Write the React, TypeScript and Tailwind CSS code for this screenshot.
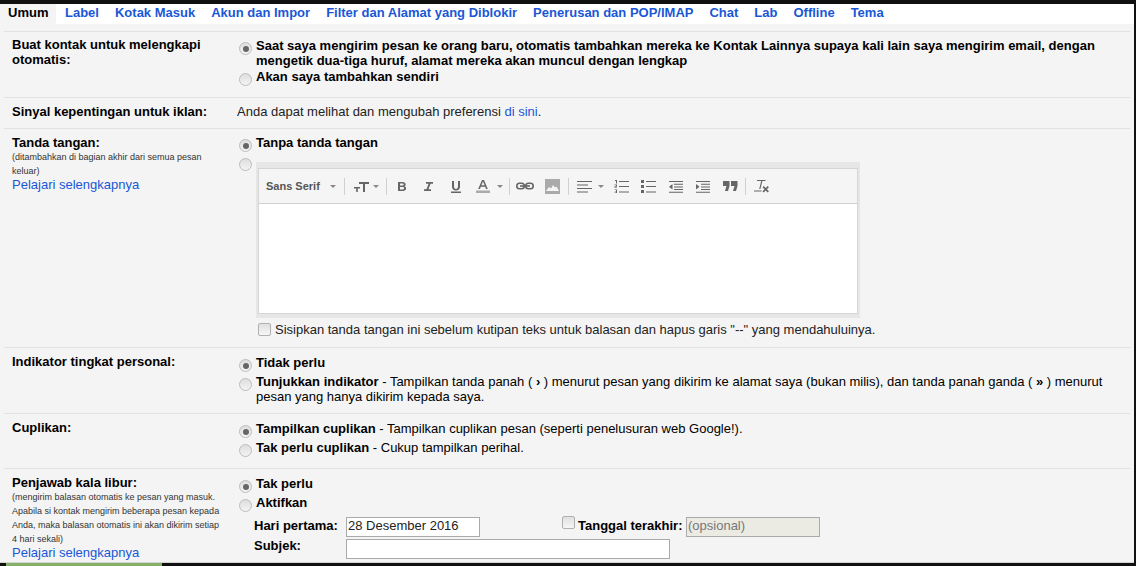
import React from "react";

const font = "font-['Liberation_Sans',Arial,sans-serif]";

const tabs = [
  "Label",
  "Kotak Masuk",
  "Akun dan Impor",
  "Filter dan Alamat yang Diblokir",
  "Penerusan dan POP/IMAP",
  "Chat",
  "Lab",
  "Offline",
  "Tema",
];

function Radio({ on }: { on?: boolean }) {
  return (
    <span className="mt-[4px] -mb-[2px] mr-[4px] flex h-[13px] w-[13px] shrink-0 items-center justify-center rounded-full border border-[#bcbcbc] bg-gradient-to-b from-[#dedede] to-[#f4f4f4]">
      {on && <span className="h-[6px] w-[6px] rounded-full bg-[#666]" />}
    </span>
  );
}

function Check({ className = "" }: { className?: string }) {
  return <span className={"block h-[13px] w-[13px] shrink-0 rounded-[2px] border border-[#b0b0b0] bg-gradient-to-b from-[#e0e0e0] to-[#f6f6f6] " + className} />;
}

function Sep({ className = "" }: { className?: string }) {
  return <span className={"h-[17px] w-px shrink-0 bg-[#d0d0d0] " + className} />;
}

function Caret({ className = "" }: { className?: string }) {
  return <span className={"h-0 w-0 shrink-0 border-x-[3px] border-t-[3px] border-x-transparent border-t-[#888] " + className} />;
}

function Tool({ children, w = 18, className = "" }: { children: React.ReactNode; w?: number; className?: string }) {
  return (
    <svg width={w} height="18" viewBox={`0 0 ${w} 18`} className={"shrink-0 " + className} fill="#666">
      {children}
    </svg>
  );
}

function Toolbar() {
  return (
    <div className="flex h-[35px] items-center border-b border-[#d0d0d0] bg-[#f5f5f5] pl-[7px]">
      <span className="w-[54px] shrink-0 text-[11px] font-bold leading-none text-[#555]">Sans Serif</span>
      <Caret className="ml-[10px]" />
      <Sep className="ml-[8px]" />
      <Tool w={16} className="ml-[8px]">
        <path d="M1 10h6v1.400H4.800V15H3.200v-3.600H1zM6 5h10v2h-4v8h-2V7H6z" />
      </Tool>
      <Caret className="ml-[4px]" />
      <Sep className="ml-[7px]" />
      <Tool w={18} className="ml-[6px]">
        <path fillRule="evenodd" d="M5 5h4.500c2 0 3.200.9 3.200 2.400 0 .9-.5 1.500-1.200 1.800 1 .3 1.600 1.100 1.600 2.100 0 1.700-1.300 2.700-3.300 2.700H5zm2 1.600v2h2.300c.9 0 1.400-.4 1.400-1s-.5-1-1.400-1zm0 3.500v2.300h2.600c.9 0 1.500-.4 1.500-1.100s-.6-1.200-1.500-1.200z" />
      </Tool>
      <Tool w={18} className="ml-[8px]">
        <path d="M7 5h7v1.800h-2.400L9.400 12.200H12V14H5v-1.800h2.400l2.200-5.400H7z" />
      </Tool>
      <Tool w={18} className="ml-[10px]">
        <path d="M5 4h2v5.500c0 1.500.8 2.400 2 2.400s2-.9 2-2.400V4h2v5.700c0 2.400-1.600 3.800-4 3.800s-4-1.400-4-3.800zM4 14.500h10V16H4z" />
      </Tool>
      <Tool w={18} className="ml-[9px]">
        <path d="M8 3h2l3.800 9H12l-.8-2.200H6.800L6 12H4.200zm-.6 5.200h3.200L9 4.600z" />
        <rect x="2" y="13.500" width="14" height="2.500" fill="#aaa" />
      </Tool>
      <Caret className="ml-[5px]" />
      <Sep className="ml-[6px]" />
      <Tool w={20} className="ml-[5px]">
        <rect x="1.800" y="6.300" width="7.500" height="5.400" rx="2.700" fill="none" stroke="#666" strokeWidth="1.600" />
        <rect x="10.700" y="6.300" width="7.500" height="5.400" rx="2.700" fill="none" stroke="#666" strokeWidth="1.600" />
        <rect x="5" y="8.200" width="10" height="1.600" />
      </Tool>
      <svg width="15" height="15" viewBox="0 0 15 15" className="ml-[10px] shrink-0">
        <rect width="15" height="15" fill="#aaa" />
        <path d="M1 12l3-4 2 1.500L8 6l2 2.500 1.500-1L14 12z" fill="#f5f5f5" />
      </svg>
      <Sep className="ml-[8px]" />
      <Tool w={15} className="ml-[8px]">
        <path d="M0 4h15v1H0zM0 7.500h11v1H0zM0 11h15v1H0zM0 14.500h11v1H0z" />
      </Tool>
      <Caret className="ml-[6px]" />
      <Tool w={15} className="ml-[10px]">
        <path d="M5 4h10v1H5zM5 9h10v1H5zM5 14.500h10v1H5zM1 3h2v3.500H2V4H1zM.5 7.500H3v2.200H1.500v.5H3v.6H.5V9.200H2v-1H.5zM.5 12.500H3v3.500H.5v-.6H2v-.9H1v-.5h1v-.9H.5z" />
      </Tool>
      <Tool w={15} className="ml-[12px]">
        <path d="M0 3h3v3H0zM0 8h3v3H0zM0 13h3v3H0zM5 4h10v1H5zM5 9h10v1H5zM5 14.500h10v1H5z" />
      </Tool>
      <Tool w={15} className="ml-[12px]">
        <path d="M1 4h14v1H1zM6 6.700h9v1H6zM6 9.400h9v1H6zM6 12.100h9v1H6zM1 14.800h14v1H1zM4.500 7v5.500L1 9.700z" />
      </Tool>
      <Tool w={15} className="ml-[12px]">
        <path d="M1 4h14v1H1zM6 6.700h9v1H6zM6 9.400h9v1H6zM6 12.100h9v1H6zM1 14.800h14v1H1zM1 7v5.500L4.500 9.700z" />
      </Tool>
      <Tool w={15} className="ml-[13px]">
        <path d="M0 4h6.500v5L5 14H2l1.500-5H0zM8 4h6.500v5L13 14h-3l1.500-5H8z" />
      </Tool>
      <Sep className="ml-[7px]" />
      <Tool w={16} className="ml-[8px]">
        <path d="M3 3h8.500v1.100H8.400L6.400 12H5.200l2-7.900H3zM0 13.500h7.500v1H0zM8.500 10.300l1.200-1.200 2 2 2-2 1.200 1.200-2 2 2 2-1.200 1.200-2-2-2 2-1.200-1.200 2-2z" />
      </Tool>
    </div>
  );
}

function Row({
  label,
  children,
  side,
  h,
  labelTop = "pt-[6px]",
  top = "pt-[6px]",
}: {
  label: string;
  side?: React.ReactNode;
  children: React.ReactNode;
  h: string;
  labelTop?: string;
  top?: string;
}) {
  return (
    <div className={"flex border-b border-[#e2e2e2] " + h}>
      <div className={"w-[234px] shrink-0 pl-[8px] pr-[20px] " + labelTop}>
        <div className="text-[13px] font-bold leading-[15px] text-black">{label}</div>
        {side}
      </div>
      <div className={"min-w-0 flex-1 pr-[20px] " + top}>{children}</div>
    </div>
  );
}

function Learn() {
  return <div className="-mt-[1px] text-[13px] leading-[15px] text-[#1a57d6]">Pelajari selengkapnya</div>;
}

function Option({ on, children }: { on?: boolean; children: React.ReactNode }) {
  return (
    <div className="flex pl-[1px] text-[13px] leading-[15px] text-black">
      <Radio on={on} />
      <div>{children}</div>
    </div>
  );
}

export default function App() {
  return (
    <div className={"flex h-[566px] w-[1136px] flex-col overflow-hidden bg-[#111] pr-[2px] pt-[4px] " + font}>
      <nav className="flex h-[20px] shrink-0 bg-white text-[13px] font-bold leading-[18px] text-[#1a57d6]">
        <span className="w-[56px] bg-[#f4f4f4] pl-[8px] text-black">Umum</span>
        <div className="flex gap-[16px] pl-[9px]">
          {tabs.map((t) => (
            <span key={t} className="whitespace-nowrap">{t}</span>
          ))}
        </div>
      </nav>

      <main className="h-[539px] shrink-0 overflow-hidden border-b border-[#d4d4d4] bg-[#f4f4f4] px-[4px]">
        <div className="h-[8px] border-b border-[#e2e2e2]" />

        <Row label="Buat kontak untuk melengkapi otomatis:" h="h-[66px]" labelTop="pt-[5px]">
          <Option on>
            <b>Saat saya mengirim pesan ke orang baru, otomatis tambahkan mereka ke Kontak Lainnya supaya kali lain saya mengirim email, dengan mengetik dua-tiga huruf, alamat mereka akan muncul dengan lengkap</b>
          </Option>
          <div className="mt-[1px]">
            <Option><b>Akan saya tambahkan sendiri</b></Option>
          </div>
        </Row>

        <Row label="Sinyal kepentingan untuk iklan:" h="h-[31px]">
          <div className="-ml-[1px] text-[13px] leading-[15px] text-[#222]">
            Anda dapat melihat dan mengubah preferensi <span className="text-[#1a57d6]">di sini</span>.
          </div>
        </Row>

        <Row
          label="Tanda tangan:"
          h="h-[219px]"
          side={
            <>
              <div className="text-[9px] leading-[14px] text-[#333]">(ditambahkan di bagian akhir dari semua pesan keluar)</div>
              <Learn />
            </>
          }
        >
          <Option on><b>Tanpa tanda tangan</b></Option>
          <div className="mt-[4px] flex pl-[1px]">
            <Radio />
            <div className="mt-[8px] w-[604px] bg-[#e6e6e6] px-[2px] pb-[4px] pt-[6px]">
              <div className="border border-[#d5d5d5] bg-white">
                <Toolbar />
                <div className="h-[109px] bg-white" />
              </div>
            </div>
          </div>
          <div className="mt-[4px] flex items-center pl-[20px] text-[13px] leading-[15px] text-[#222]">
            <Check className="mr-[4px]" />
            Sisipkan tanda tangan ini sebelum kutipan teks untuk balasan dan hapus garis "--" yang mendahuluinya.
          </div>
        </Row>

        <Row label="Indikator tingkat personal:" h="h-[66px]" top="pt-[7px]">
          <Option on><b>Tidak perlu</b></Option>
          <div className="mt-[4px]">
            <Option>
              <b>Tunjukkan indikator</b> - Tampilkan tanda panah ( <b>›</b> ) menurut pesan yang dikirim ke alamat saya (bukan milis), dan tanda panah ganda ( <b>»</b> ) menurut pesan yang hanya dikirim kepada saya.
            </Option>
          </div>
        </Row>

        <Row label="Cuplikan:" h="h-[55px]" top="pt-[7px]">
          <Option on>
            <b>Tampilkan cuplikan</b> - Tampilkan cuplikan pesan (seperti penelusuran web Google!).
          </Option>
          <div className="mt-[4px]">
            <Option>
              <b>Tak perlu cuplikan</b> - Cukup tampilkan perihal.
            </Option>
          </div>
        </Row>

        <div className="flex">
          <div className="w-[234px] shrink-0 pl-[8px] pr-[12px] pt-[6px]">
            <div className="text-[13px] font-bold leading-[15px] text-black">Penjawab kala libur:</div>
            <div className="text-[9px] leading-[14px] text-[#333]">
              (mengirim balasan otomatis ke pesan yang masuk. Apabila si kontak mengirim beberapa pesan kepada Anda, maka balasan otomatis ini akan dikirim setiap 4 hari sekali)
            </div>
            <Learn />
          </div>
          <div className="flex-1 pt-[7px]">
            <Option on><b>Tak perlu</b></Option>
            <div className="mt-[4px]">
              <Option><b>Aktifkan</b></Option>
            </div>
            <div className="mt-[7px] flex h-[20px] items-center pl-[16px] text-[13px] font-bold text-black">
              <span className="mb-[2px] w-[92px]">Hari pertama:</span>
              <span className="flex h-[20px] w-[134px] items-center border border-[#aaa] bg-white pb-[2px] pl-[1px] font-normal text-[#222]">28 Desember 2016</span>
              <Check className="mb-[9px] ml-[82px] mr-[3px]" />
              <span className="mb-[2px] w-[108px]">Tanggal terakhir:</span>
              <span className="flex h-[20px] w-[134px] items-center border border-[#aaa] bg-[#ebebe4] pb-[2px] pl-[1px] font-normal text-[#777]">(opsional)</span>
            </div>
            <div className="mt-[2px] flex h-[20px] items-center pl-[16px] text-[13px] font-bold text-black">
              <span className="mb-[6px] w-[92px]">Subjek:</span>
              <span className="h-[20px] w-[324px] border border-[#aaa] bg-white" />
            </div>
          </div>
        </div>
      </main>

      <div className="h-[3px] shrink-0 pl-[6px]">
        <div className="h-[3px] w-[156px] bg-[#86b06a]" />
      </div>
    </div>
  );
}
